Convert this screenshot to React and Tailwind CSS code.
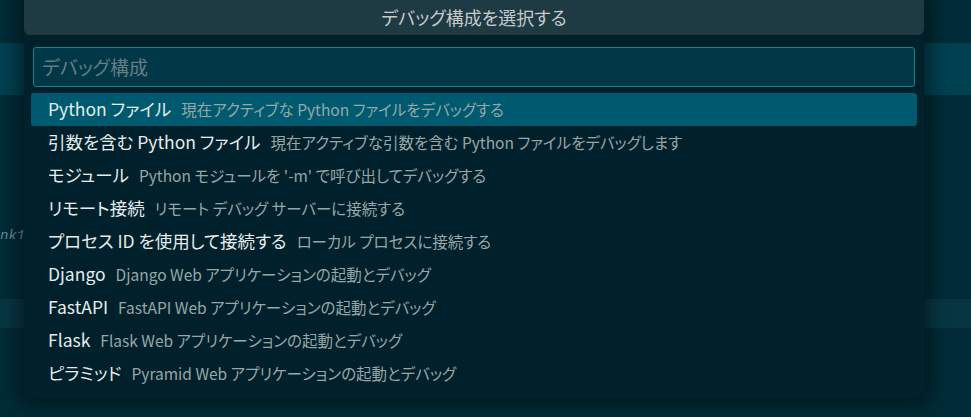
import React from 'react';

const items = [
  { label: 'Python ファイル', desc: '現在アクティブな Python ファイルをデバッグする' },
  { label: '引数を含む Python ファイル', desc: '現在アクティブな引数を含む Python ファイルをデバッグします' },
  { label: 'モジュール', desc: "Python モジュールを '-m' で呼び出してデバッグする" },
  { label: 'リモート接続', desc: 'リモート デバッグ サーバーに接続する' },
  { label: 'プロセス ID を使用して接続する', desc: 'ローカル プロセスに接続する' },
  { label: 'Django', desc: 'Django Web アプリケーションの起動とデバッグ' },
  { label: 'FastAPI', desc: 'FastAPI Web アプリケーションの起動とデバッグ' },
  { label: 'Flask', desc: 'Flask Web アプリケーションの起動とデバッグ' },
  { label: 'ピラミッド', desc: 'Pyramid Web アプリケーションの起動とデバッグ' },
];

const font = "font-['Noto_Sans_CJK_JP',sans-serif] [font-feature-settings:'palt']";

export default function App() {
  return (
    <div className={`relative h-[417px] w-[971px] overflow-hidden bg-[#002b36] ${font}`}>
      {/* editor behind the picker */}
      <div className="flex flex-col">
        <div className="h-[43px]" />
        <div className="h-[52px] bg-[#004050]" />
        <div className="h-[126px]" />
        <div className="h-[18px] overflow-hidden whitespace-nowrap">
          <span className="font-['Liberation_Mono',monospace] text-[14px] leading-[16px] italic text-[#6c8a92] underline decoration-[#6c8a92] underline-offset-2">
            nk1
          </span>
        </div>
        <div className="h-[60px]" />
        <div className="h-[29px] bg-[#073642]" />
      </div>

      {/* quick pick */}
      <div className="absolute left-[24px] top-0 flex h-[398px] w-[900px] flex-col rounded-b-[8px] bg-[#00212b] shadow-[0_0_18px_6px_rgba(0,0,0,0.45)]">
        <div className="flex h-[35px] items-center justify-center rounded-b-[6px] bg-[#1e3a43] text-[18px] text-[#c4cbcc]">
          デバッグ構成を選択する
        </div>
        <div className="mx-[9px] mt-[12px] flex h-[40px] items-center rounded-[3px] border border-[#1f8080] bg-[#003847] px-[8px]">
          <span className="text-[19px] text-[#667d84]">デバッグ構成</span>
        </div>
        <div className="mx-[7px] mt-[6px] flex flex-col">
          {items.map((it, i) => (
            <div
              key={it.label}
              className={`flex h-[33px] items-center whitespace-nowrap rounded-[3px] px-[17px] ${i === 0 ? 'bg-[#005a6f]' : ''}`}
            >
              <span className="text-[17.5px] text-[#e6ecec]">{it.label}</span>
              <span className="ml-[10px] text-[15.5px] text-[#98a6a7]">{it.desc}</span>
            </div>
          ))}
        </div>
      </div>
    </div>
  );
}
